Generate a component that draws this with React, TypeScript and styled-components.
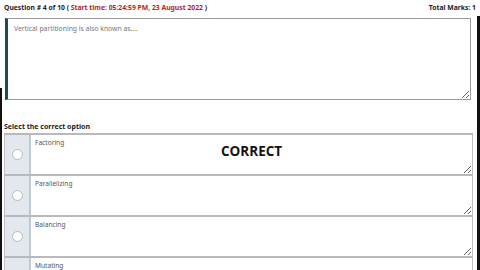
import React from 'react'
import styled, { createGlobalStyle } from 'styled-components'

const GlobalStyle = createGlobalStyle`
    html, body {
        margin: 0;
        padding: 0;
        background: #ffffff;
        font-family: "Noto Sans", "Open Sans", sans-serif;
        overflow: hidden;
    }
`
const Page = styled.div`
    position: relative;
    width: 480px;
    height: 270px;
    overflow: hidden;
    background: #fff;
`
const Header = styled.div`
    display: flex;
    justify-content: space-between;
    align-items: center;
    height: 15px;
    padding: 0 4px 0 4px;
    font-size: 6.8px;
    font-weight: 700;
    color: #222;
    white-space: nowrap;
`
const StartTime = styled.span`
    color: #b3242a;
`
const QuestionBox = styled.textarea`
    display: block;
    box-sizing: border-box;
    margin: 3px 0 0 5px;
    width: 466px;
    height: 82px;
    padding: 5px 6px;
    border: 1px solid #9a9a9a;
    border-left: 3px solid #1d4a57;
    font-family: inherit;
    font-size: 6.8px;
    color: #777;
    resize: vertical;
    outline: none;
`
const SectionTitle = styled.div`
    margin: 22px 0 0 4px;
    height: 11px;
    font-size: 7px;
    font-weight: 700;
    color: #222;
`
const Options = styled.div`
    display: flex;
    flex-direction: column;
    margin-left: 4px;
    width: 469px;
`
const OptionRow = styled.div`
    display: flex;
    height: 41px;
    border-top: 2px solid #b9b9b9;
    box-sizing: border-box;
`
const RadioCell = styled.div`
    width: 24px;
    display: flex;
    align-items: center;
    justify-content: center;
    background: #e3e8ef;
    border-left: 1px solid #c4c4c4;
    border-right: 2px solid #c2c8d0;
`
const Radio = styled.span`
    width: 11px;
    height: 11px;
    border-radius: 50%;
    border: 1px solid #b8b8b8;
    background: #fff;
    box-sizing: border-box;
`
const OptionText = styled.textarea`
    flex: 1;
    box-sizing: border-box;
    border: none;
    border-right: 1px solid #bdbdbd;
    padding: 3px 4px;
    font-family: inherit;
    font-size: 6.6px;
    color: #555;
    resize: vertical;
    outline: none;
    background: #fff;
`
const Stamp = styled.div`
    position: absolute;
    left: 221px;
    top: 142px;
    font-family: "Open Sans", sans-serif;
    font-size: 13.5px;
    font-weight: 700;
    color: #141414;
`
const EdgeLeft = styled.div`
    position: absolute;
    left: 0;
    top: 88px;
    bottom: 0;
    width: 2px;
    background: #111;
`
const EdgeRight = styled.div`
    position: absolute;
    right: 0;
    top: 16px;
    bottom: 0;
    width: 3px;
    background: #111;
`

const options = ['Factoring', 'Parallelizing', 'Balancing', 'Mutating']

const App = () => {
    return (
        <Page>
            <GlobalStyle />
            <Header>
                <span>
                    Question # 4 of 10 ( <StartTime>Start time: 05:24:59 PM, 23 August 2022</StartTime> )
                </span>
                <span>Total Marks: 1</span>
            </Header>
            <QuestionBox readOnly defaultValue="Vertical partitioning is also known as...." />
            <SectionTitle>Select the correct option</SectionTitle>
            <Options>
                {options.map((o) => (
                    <OptionRow key={o}>
                        <RadioCell>
                            <Radio />
                        </RadioCell>
                        <OptionText readOnly defaultValue={o} />
                    </OptionRow>
                ))}
            </Options>
            <Stamp>CORRECT</Stamp>
            <EdgeLeft />
            <EdgeRight />
        </Page>
    )
}
export default App
